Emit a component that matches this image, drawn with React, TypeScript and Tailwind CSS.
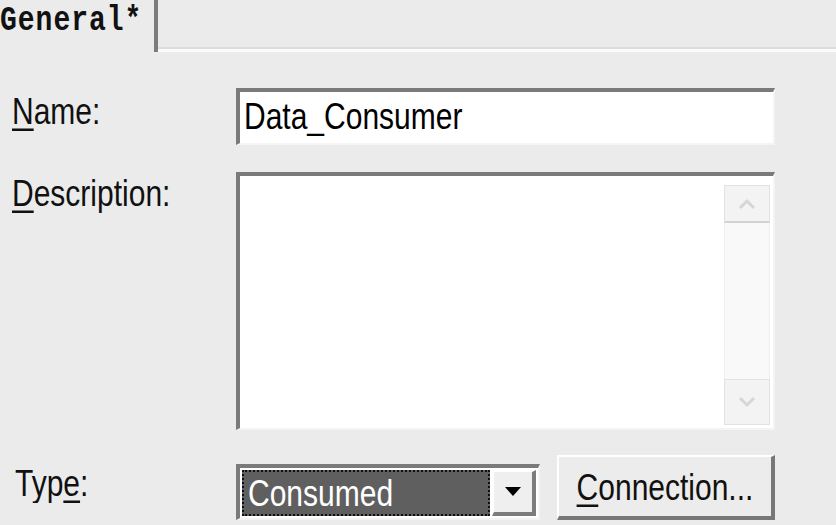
import React from "react";

const font = { fontFamily: '"Liberation Sans", Arial, sans-serif' };

// the old bitmap font is taller than Arial, stretch a bit
const tall = "inline-block scale-y-[1.25] origin-center";

const Label = ({ ch, rest }: { ch: string; rest: string }) => (
  <span className={`text-[30px] leading-none text-[#111] ${tall}`}>
    <span className="underline decoration-[2px] underline-offset-[4px]">{ch}</span>
    {rest}
  </span>
);

export default function App() {
  return (
    <div
      className="w-[836px] h-[525px] bg-[#ebebeb] flex flex-col overflow-hidden"
      style={font}
    >
      {/* tab strip */}
      <div className="flex h-[52px] shrink-0">
        <div className="w-[158px] border-r-[4px] border-[#7c7c7c] flex items-start pt-[7px]">
          <span
            className={`text-[28px] font-bold text-[#111] leading-none tracking-[1px] ${tall}`}
            style={{ fontFamily: '"Liberation Mono", "Courier New", monospace' }}
          >
            General*
          </span>
        </div>
        <div className="flex-1 flex flex-col justify-end">
          <div className="h-[5px] border-t-[2px] border-[#dcdcdc] bg-[#fafafa]" />
        </div>
      </div>

      {/* form */}
      <div className="flex flex-col pl-[12px] pt-[36px]">
        <div className="flex items-center h-[57px]">
          <div className="w-[224px] -mt-[10px]">
            <Label ch="N" rest="ame:" />
          </div>
          <div className="w-[539px] h-[57px] bg-white border-t-[4px] border-l-[4px] border-[#7a7a7a] border-b-[2px] border-r-[2px] border-b-[#f4f4f4] border-r-[#f4f4f4] flex items-center pl-[4px] pb-[4px]">
            <span className={`text-[30px] leading-none text-black ${tall}`}>Data_Consumer</span>
          </div>
        </div>

        <div className="flex mt-[27px] h-[258px]">
          <div className="w-[224px] pt-[6px]">
            <Label ch="D" rest="escription:" />
          </div>
          <div className="w-[539px] h-[258px] bg-white border-t-[4px] border-l-[4px] border-[#7a7a7a] border-b-[2px] border-r-[2px] border-b-[#f4f4f4] border-r-[#f4f4f4] flex justify-end pr-[3px] pt-[9px] pb-[3px]">
            <div className="w-[46px] flex flex-col bg-[#f7f7f7]">
              <div className="h-[38px] border border-[#e2e2e2] border-b-[2px] border-b-[#d4d4d4] flex items-center justify-center bg-[#f3f3f3]">
                <svg width="18" height="12" viewBox="0 0 18 12">
                  <path d="M2 10 L9 3 L16 10" fill="none" stroke="#d6d6d6" strokeWidth="3" />
                </svg>
              </div>
              <div className="flex-1 border-x border-[#efefef] bg-[#f9f9f9]" />
              <div className="h-[46px] border border-[#e2e2e2] flex items-center justify-center bg-[#f3f3f3]">
                <svg width="18" height="12" viewBox="0 0 18 12">
                  <path d="M2 2 L9 9 L16 2" fill="none" stroke="#d6d6d6" strokeWidth="3" />
                </svg>
              </div>
            </div>
          </div>
        </div>

        <div className="flex items-center mt-[25px] h-[65px]">
          <div className="w-[224px] pl-[3px] -mt-[8px]">
            <span className={`text-[30px] leading-none text-[#111] ${tall}`}>
              Typ
              <span className="underline decoration-[2px] underline-offset-[4px]">e</span>:
            </span>
          </div>
          <div className="w-[304px] h-[56px] mt-[8px] bg-white border-t-[4px] border-l-[4px] border-[#7a7a7a] border-b-[2px] border-r-[2px] border-b-[#f4f4f4] border-r-[#f4f4f4] flex items-center p-[2px] gap-[2px]">
            <div className="flex-1 h-full bg-[#5f5f5f] border-[2px] border-dotted border-[#111] flex items-center pl-[4px]">
              <span className={`text-[30px] leading-none text-white ${tall}`}>Consumed</span>
            </div>
            <div className="w-[44px] h-full bg-[#efefef] border-t-[2px] border-l-[2px] border-white border-b-[4px] border-r-[4px] border-b-[#7c7c7c] border-r-[#7c7c7c] flex items-center justify-center">
              <svg width="16" height="10" viewBox="0 0 16 10">
                <path d="M0 0 H16 L8 9 Z" fill="#000" />
              </svg>
            </div>
          </div>
          <div className="ml-[17px] w-[218px] h-[65px] bg-[#ececec] border-t-[2px] border-l-[2px] border-white border-b-[4px] border-r-[4px] border-b-[#777] border-r-[#777] flex items-center justify-center">
            <span className={`text-[30px] leading-none text-[#111] ${tall}`}>
              <span className="underline decoration-[2px] underline-offset-[4px]">C</span>
              onnection...
            </span>
          </div>
        </div>
      </div>
    </div>
  );
}
